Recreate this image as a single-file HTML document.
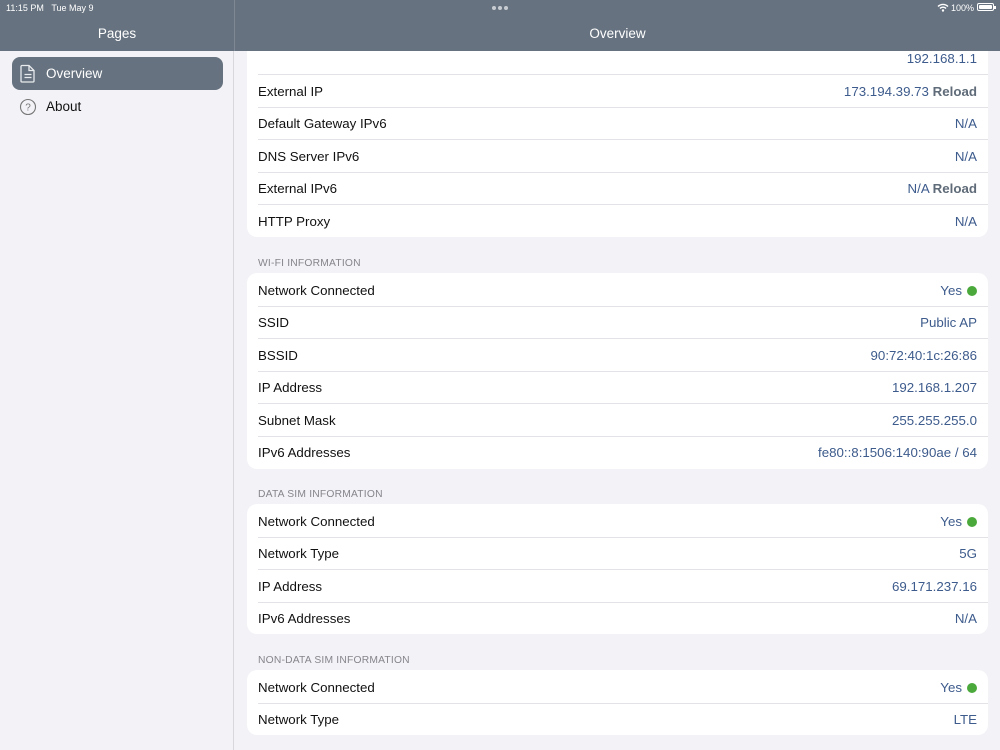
<!DOCTYPE html>
<html><head><meta charset="utf-8"><style>
*{margin:0;padding:0;box-sizing:border-box}
body{width:1000px;height:750px;overflow:hidden;background:#f2f2f7;font-family:"Liberation Sans",sans-serif;position:relative}
.hdr{position:absolute;top:0;left:0;width:1000px;height:51px;background:#66727f;color:#fff;z-index:2}
.side{position:absolute;top:51px;left:0;width:234px;height:699px;background:#f2f2f7;border-right:1px solid #d8d8dc}
.vline{position:absolute;left:234px;top:0;width:1px;height:51px;background:#7d8894;z-index:3}
.sel{position:absolute;left:12px;top:57px;width:211px;height:33px;background:#66727f;border-radius:8px}
.item{position:absolute;left:46px;font-size:13.5px}
.main{position:absolute;left:235px;top:51px;width:765px;height:699px;overflow:hidden}
.card{position:absolute;left:12px;width:741px;background:#fff;border-radius:10px}
.row{height:32.6px;position:relative;font-size:13.3px;color:#111}
.row .l{position:absolute;left:11px;top:9.5px}
.row .r{position:absolute;right:11px;top:9.5px;color:#3d5b8c}
.row+.row:before{content:"";position:absolute;left:11px;right:0;top:0;height:1px;background:#e3e3e7}
.rl{color:#5f6b78;font-weight:bold}
.dot{display:inline-block;width:10px;height:10px;border-radius:50%;background:#4ba93c;margin-left:5px;vertical-align:-1px}
.sh{position:absolute;left:23px;font-size:10.3px;color:#85858b;letter-spacing:.2px}
</style></head><body>
<div class="hdr">
<div style="position:absolute;left:6px;top:3px;font-size:9px">11:15 PM&nbsp;&nbsp;&nbsp;Tue May 9</div>
<div style="position:absolute;left:492px;top:6px;width:17px;height:4px">
<span style="position:absolute;left:0;width:4px;height:4px;border-radius:50%;background:#c7ccd2"></span>
<span style="position:absolute;left:6px;width:4px;height:4px;border-radius:50%;background:#c7ccd2"></span>
<span style="position:absolute;left:12px;width:4px;height:4px;border-radius:50%;background:#c7ccd2"></span></div>
<svg style="position:absolute;left:937px;top:3px" width="12" height="9" viewBox="0 0 12 9"><path d="M1 3.5A7 7 0 0 1 11 3.5M3 5.5A4 4 0 0 1 9 5.5" stroke="#fff" stroke-width="1.4" fill="none"/><circle cx="6" cy="7.5" r="1.2" fill="#fff"/></svg>
<div style="position:absolute;left:951px;top:3px;font-size:9px">100%</div>
<div style="position:absolute;left:977px;top:3px;width:17px;height:8px;border:1px solid #fff;border-radius:2px;padding:1px"><div style="background:#fff;width:100%;height:100%;border-radius:1px"></div></div>
<div style="position:absolute;left:994px;top:6px;width:1.5px;height:3px;background:#fff"></div>
<div style="position:absolute;left:0;width:234px;top:26px;text-align:center;font-size:13.5px">Pages</div>
<div style="position:absolute;left:235px;width:765px;top:26px;text-align:center;font-size:13.5px">Overview</div>
</div>
<div class="vline"></div>
<div class="side"></div>
<div class="sel"></div>
<svg style="position:absolute;left:20px;top:64px" width="16" height="19" viewBox="0 0 16 19"><path d="M2 1.5h7l5 5v10.5a1 1 0 0 1-1 1H2a1 1 0 0 1-1-1V2.5a1 1 0 0 1 1-1zM9 1.5v5h5M4.5 10.5h7M4.5 13.5h7" stroke="#e8ebee" stroke-width="1.3" fill="none"/></svg>
<div class="item" style="top:66px;color:#fff">Overview</div>
<svg style="position:absolute;left:19px;top:98px" width="18" height="18" viewBox="0 0 18 18"><circle cx="9" cy="9" r="7.5" stroke="#777" stroke-width="1.1" fill="none"/><text x="9" y="12.5" font-size="10" text-anchor="middle" fill="#777" font-family="Liberation Sans">?</text></svg>
<div class="item" style="top:99px;color:#111">About</div>

<div class="main">
<div class="card" style="top:-9.5px">
<div class="row"><span class="l"></span><span class="r">192.168.1.1</span></div>
<div class="row"><span class="l">External IP</span><span class="r">173.194.39.73 <b class="rl">Reload</b></span></div>
<div class="row"><span class="l">Default Gateway IPv6</span><span class="r">N/A</span></div>
<div class="row"><span class="l">DNS Server IPv6</span><span class="r">N/A</span></div>
<div class="row"><span class="l">External IPv6</span><span class="r">N/A <b class="rl">Reload</b></span></div>
<div class="row"><span class="l">HTTP Proxy</span><span class="r">N/A</span></div>
</div>
<div class="sh" style="top:207px">WI-FI INFORMATION</div>
<div class="card" style="top:222px">
<div class="row"><span class="l">Network Connected</span><span class="r">Yes<span class="dot"></span></span></div>
<div class="row"><span class="l">SSID</span><span class="r">Public AP</span></div>
<div class="row"><span class="l">BSSID</span><span class="r">90:72:40:1c:26:86</span></div>
<div class="row"><span class="l">IP Address</span><span class="r">192.168.1.207</span></div>
<div class="row"><span class="l">Subnet Mask</span><span class="r">255.255.255.0</span></div>
<div class="row"><span class="l">IPv6 Addresses</span><span class="r">fe80::8:1506:140:90ae / 64</span></div>
</div>
<div class="sh" style="top:438px">DATA SIM INFORMATION</div>
<div class="card" style="top:453px">
<div class="row"><span class="l">Network Connected</span><span class="r">Yes<span class="dot"></span></span></div>
<div class="row"><span class="l">Network Type</span><span class="r">5G</span></div>
<div class="row"><span class="l">IP Address</span><span class="r">69.171.237.16</span></div>
<div class="row"><span class="l">IPv6 Addresses</span><span class="r">N/A</span></div>
</div>
<div class="sh" style="top:604px">NON-DATA SIM INFORMATION</div>
<div class="card" style="top:619px">
<div class="row"><span class="l">Network Connected</span><span class="r">Yes<span class="dot"></span></span></div>
<div class="row"><span class="l">Network Type</span><span class="r">LTE</span></div>
</div>
</div>
</body></html>
